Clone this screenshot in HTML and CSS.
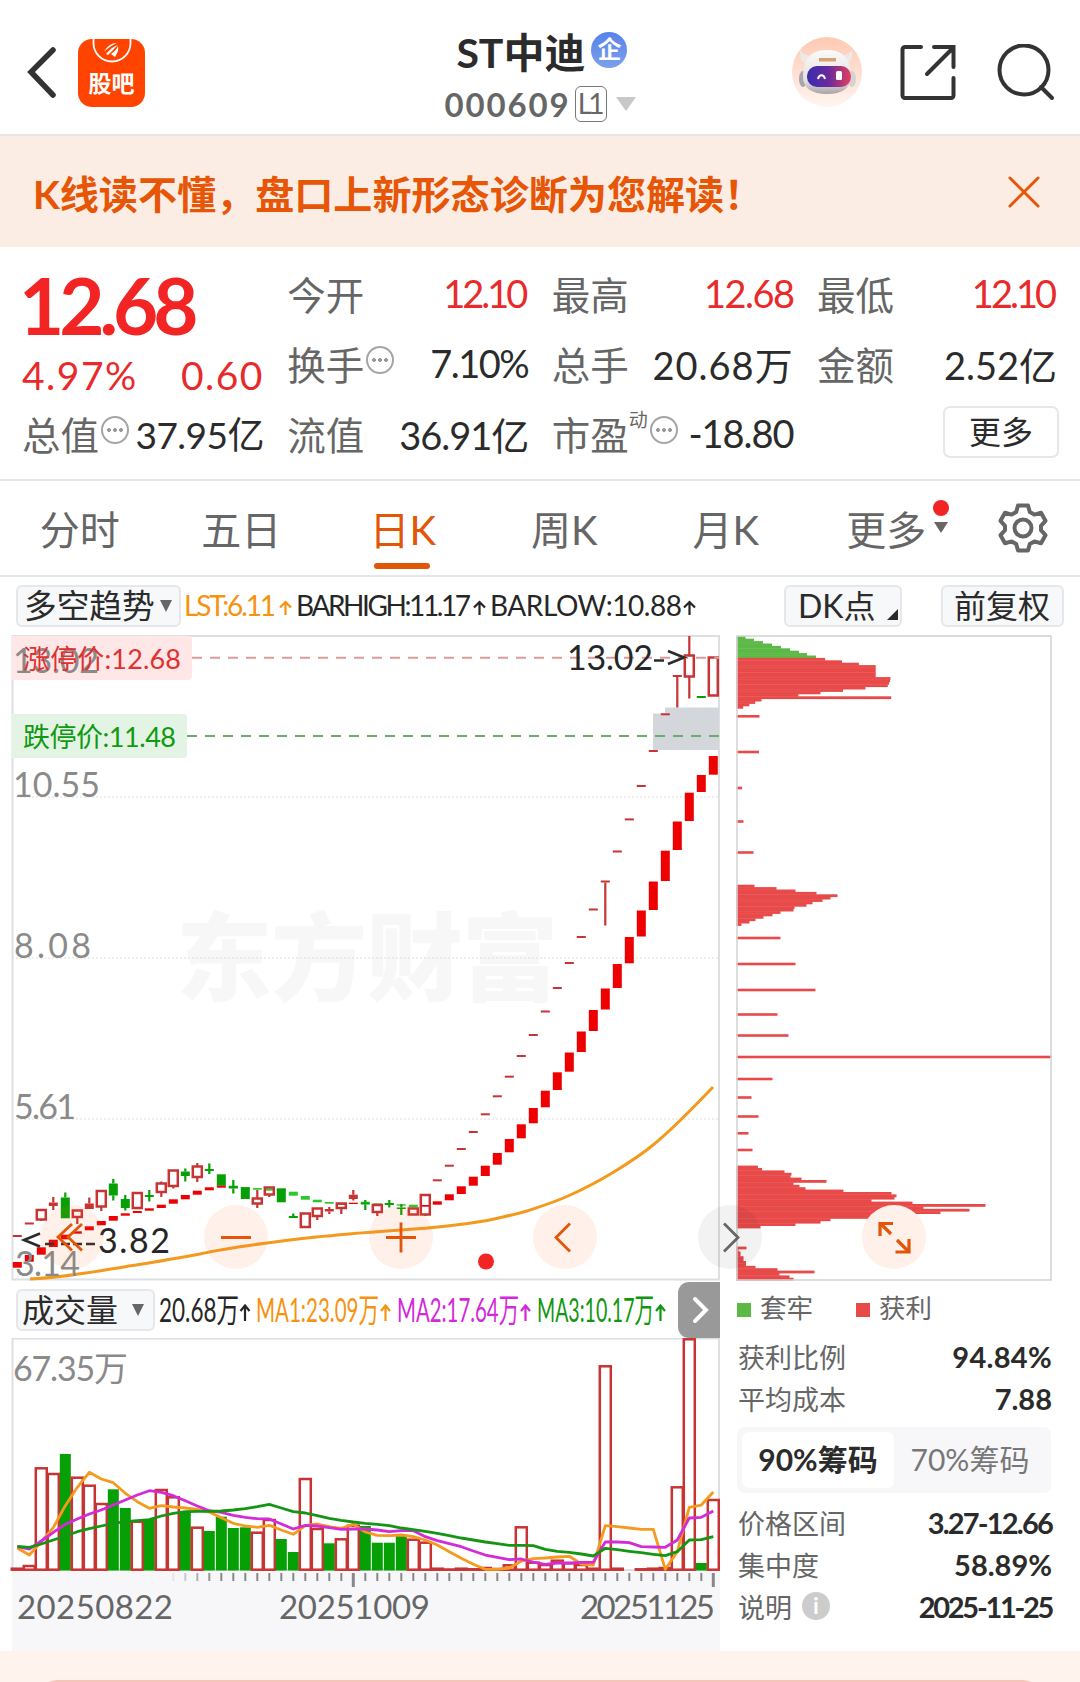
FILE: index.html
```html
<!DOCTYPE html>
<html lang="zh-CN">
<head>
    <meta charset="UTF-8">
    <meta name="viewport" content="width=device-width, initial-scale=1.0">
    <title>ST中迪 000609</title>
    <link rel="stylesheet" href="styles.css">
</head>
<body>
    <header class="header">
        <div class="header-left">
            <svg class="back" width="34" height="56" viewBox="0 0 34 56"><path d="M29 6 7 28l22 23"/></svg>
            <div class="logo">
                <svg width="67" height="68" viewBox="0 0 67 68">
                    <path d="M15.500 0v4a18.500 18.500 0 0 0 37 0V0" fill="none" stroke="#fff" stroke-width="1.800"/>
                    <path d="M26 13c3-6 8-9 13-9-6 3-9 5-13 9zM28 15c4-5 8-8 12-9-4 4-7 7-10 10zM33 15c3-2 6-5 7-8 1 4-1 8-3 11z" fill="#fff"/>
                </svg>
                <span>股吧</span>
            </div>
        </div>
        <div class="title">
            <div class="name">ST中迪<span class="badge">企</span></div>
            <div class="code">000609<span class="level">L1</span><i class="arrow"></i></div>
        </div>
        <div class="header-right">
            <svg width="70" height="70" viewBox="0 0 70 70">
                <defs>
                    <linearGradient id="robotBg" x1="0" y1="0" x2="0" y2="1"><stop offset="0" stop-color="#fdc9b2"/><stop offset="1" stop-color="#fff5f0"/></linearGradient>
                    <linearGradient id="visor"><stop offset="0" stop-color="#3a2cae"/><stop offset=".5" stop-color="#6b2a9c"/><stop offset="1" stop-color="#e5405c"/></linearGradient>
                    <linearGradient id="helmet" x1="0" y1="0" x2="0" y2="1"><stop offset="0" stop-color="#fbfafa"/><stop offset=".7" stop-color="#e4e0e0"/><stop offset="1" stop-color="#a8a3a5"/></linearGradient>
                </defs>
                <circle cx="35" cy="35" r="35" fill="url(#robotBg)"/>
                <path d="M8 13c0 7 1 12 6 14l7-8c-6 0-10-2-13-6zM60 13c1 7-1 12-6 14l-7-8c6 0 10-2 13-6z" fill="#eee8e6"/>
                <ellipse cx="11" cy="42" rx="4" ry="8" fill="#a8a6ab"/>
                <ellipse cx="60" cy="42" rx="4" ry="8" fill="#d5d2d5"/>
                <path d="M35 13c15 0 24 8 24 27 0 11-9 17-24 17s-24-6-24-17c0-19 9-27 24-27z" fill="url(#helmet)"/>
                <rect x="27" y="21" width="17" height="3.500" fill="#dca070"/>
                <rect x="15" y="29" width="44" height="21" rx="10" fill="url(#visor)"/>
                <path d="M26 42c1-5 6-5 7 0" fill="none" stroke="#fff" stroke-width="2"/>
                <rect x="44" y="34" width="6" height="9" rx="1.500" fill="#fff"/>
            </svg>
            <svg class="line" width="56" height="58" viewBox="0 0 56 58"><path d="M21 3H5a2.500 2.500 0 0 0-2.500 2.500v46A2.500 2.500 0 0 0 5 54h46a2.500 2.500 0 0 0 2.500-2.500V34M34 3h19.500v20M53 4 27 30"/></svg>
            <svg class="line" width="58" height="58" viewBox="0 0 58 58"><circle cx="27" cy="26" r="24.500"/><path d="m44 43 11 11"/></svg>
        </div>
    </header>

    <div class="banner">
        <span>K线读不懂，盘口上新形态诊断为您解读！</span>
        <svg width="32" height="32" viewBox="0 0 32 32"><path d="m2 2 28 28M30 2 2 30"/></svg>
    </div>

    <section class="quote">
        <div class="col main">
            <div class="price">12.68</div>
            <div class="item red"><span class="w1">4.97%</span><span class="w1">0.60</span></div>
            <div class="item small"><label>总值</label><i class="tip"></i><b>37.95亿</b></div>
        </div>
        <div class="col">
            <div class="item red"><label>今开</label><b class="t4">12.10</b></div>
            <div class="item"><label>换手</label><i class="tip"></i><b class="t2">7.10%</b></div>
            <div class="item"><label>流值</label><b class="t1">36.91亿</b></div>
        </div>
        <div class="col">
            <div class="item red"><label>最高</label><b class="t2">12.68</b></div>
            <div class="item"><label>总手</label><b class="w2">20.68万</b></div>
            <div class="item"><label>市盈<sup>动</sup></label><i class="tip"></i><b class="t1">-18.80</b></div>
        </div>
        <div class="col">
            <div class="item red"><label>最低</label><b class="t4">12.10</b></div>
            <div class="item"><label>金额</label><b>2.52亿</b></div>
            <div class="item"><button class="more">更多</button></div>
        </div>
    </section>

    <nav class="tabs">
        <div class="tab">分时</div>
        <div class="tab">五日</div>
        <div class="tab active">日K</div>
        <div class="tab">周K</div>
        <div class="tab">月K</div>
        <div class="tab"><span class="tab-more">更多</span></div>
        <div class="gear">
            <svg width="50" height="50" viewBox="0 0 50 50">
                <path d="M20 2.500h10l1.800 6.500 4.500 2.600 6.700-1.800 4.500 8-4.500 5v4.400l4.500 5-4.500 8-6.700-1.800-4.500 2.600L30 47.500H20L18.200 41l-4.500-2.600L7 40.200l-4.500-8 4.500-5v-4.400l-4.500-5 4.500-8 6.700 1.800L18.200 9z"/>
                <circle cx="25" cy="25" r="8.500"/>
            </svg>
        </div>
    </nav>

    <div class="toolbar">
        <div class="chip trend">多空趋势<i class="caret"></i></div>
        <svg class="indicators" width="530" height="40" viewBox="184 587 530 40">
            <g font-size="28">
                <text class="c-orange" x="184" y="617" textLength="92">LST:6.11</text>
                <text class="c-dark" x="296" y="617" textLength="175">BARHIGH:11.17</text>
                <text class="c-dark" x="490" y="617" textLength="192">BARLOW:10.88</text>
            </g>
            <path class="up" stroke="#f59310" d="M285.500 616v-13M280 608.500l5.500-5.500 5.500 5.500"/>
            <path class="up" stroke="#262626" d="M479.500 616v-13M474 608.500l5.500-5.500 5.500 5.500M689.500 616v-13M684 608.500l5.500-5.500 5.500 5.500"/>
        </svg>
        <div class="chip dk">DK点<i class="corner"></i></div>
        <div class="chip adjust">前复权</div>
    </div>

    <div class="charts">
        <div class="left">
            <svg class="kline" width="720" height="646" viewBox="0 635 720 646">
                <text class="watermark" x="176" y="993" textLength="382">东方财富</text>
                <path class="grid" d="M12 797H719M12 958H719M12 1119H719"/>
                <path class="frame" d="M12.500 1279.500V636H719V1279.500z"/>
                <path fill="#d3d7dc" d="M653 750V713.500h12V707.500h54V750z"/>
                <g id="trend"></g>
                <g id="candles"></g>
                <path class="ma" d="M30 1279C48 1278 60 1277 78 1274 97 1272 115 1268 133 1265.500 156 1262 178 1258 200 1254 222 1249 245 1246 267 1243 290 1240 311 1237 333 1235.500 357 1233 379 1231.500 401 1230 416 1229 430 1228 443 1226.500 459 1225 473 1223 487 1220.500 502 1217 514 1215 527 1211 542 1206 555 1202 568 1196 584 1189 598 1181.500 613 1172.500 627 1164 641 1155 653 1145 674 1128 694 1107 713 1087"/>
                <path fill="#fee7e6" d="M12 636h176a4 4 0 0 1 4 4v36a4 4 0 0 1-4 4H12z"/>
                <path fill="#e3f4e5" d="M12 714h171a4 4 0 0 1 4 4v36a4 4 0 0 1-4 4H12z"/>
                <path d="M192 657.700H719" stroke="#dc9b9b" stroke-width="2" stroke-dasharray="10 8"/>
                <path d="M187 736H719" stroke="#6aad6e" stroke-width="2" stroke-dasharray="10 8"/>
                <g class="scale">
                    <text x="13" y="672.500" textLength="86">13.02</text>
                    <text x="13" y="796.500" textLength="87">10.55</text>
                    <text x="14" y="958" textLength="77">8.08</text>
                    <text x="14" y="1118.500" textLength="62">5.61</text>
                    <text x="15" y="1276" textLength="65">3.14</text>
                </g>
                <text x="23" y="669" font-size="27" fill="#e03030" textLength="158">涨停价:12.68</text>
                <text x="23" y="747" font-size="27" fill="#109a10" textLength="153">跌停价:11.48</text>
                <text class="c-dark" x="567" y="670" font-size="34" textLength="86">13.02</text>
                <path class="pointer" d="M654 660.500h10M668 651l16 6.500-16 6.500"/>
                <text class="c-dark" x="98" y="1253" font-size="34" textLength="72">3.82</text>
                <path class="pointer" d="M40 1233.500 24 1240l16 6.500M45 1244h9M61 1244h9M73 1244h9M86 1244h9"/>
                <g class="pads">
                    <circle cx="72" cy="1237" r="32"/>
                    <circle cx="236" cy="1237" r="32"/>
                    <circle cx="401" cy="1237" r="32"/>
                    <circle cx="565" cy="1237" r="32"/>
                    <circle cx="730" cy="1237" r="32" fill="#000" fill-opacity=".05"/>
                </g>
                <path class="pad-icon" d="M72 1224 58 1237l14 13.500M82 1224l-14 13 14 13.500M221 1237.500h30M386 1237.500h30M401 1222.500v30M570 1223.500l-14 14 14 14"/>
                <path class="pad-icon gray" d="M724 1223.500l14 14-14 14"/>
                <circle cx="486" cy="1261.500" r="8" fill="#f22424"/>
            </svg>
            <div class="vol-head">
                <div class="chip vol">成交量<i class="caret"></i></div>
                <svg width="514" height="44" viewBox="158 1288 514 44">
                    <g font-size="33">
                        <text class="c-dark" x="159" y="1322" textLength="80" lengthAdjust="spacingAndGlyphs">20.68万</text>
                        <text class="c-orange" x="256" y="1322" textLength="123" lengthAdjust="spacingAndGlyphs">MA1:23.09万</text>
                        <text class="c-purple" x="397" y="1322" textLength="122" lengthAdjust="spacingAndGlyphs">MA2:17.64万</text>
                        <text class="c-green" x="537" y="1322" textLength="117" lengthAdjust="spacingAndGlyphs">MA3:10.17万</text>
                    </g>
                    <path class="up" stroke="#262626" d="M245 1321v-15M240.500 1311l4.500-5.500 4.500 5.500"/>
                    <path class="up" stroke="#f59310" d="M385.500 1321v-15M381 1311l4.500-5.500 4.500 5.500"/>
                    <path class="up" stroke="#d22ad8" d="M525.500 1321v-15M521 1311l4.500-5.500 4.500 5.500"/>
                    <path class="up" stroke="#119611" d="M660.500 1321v-15M656 1311l4.500-5.500 4.500 5.500"/>
                </svg>
                <div class="next"><svg width="20" height="30" viewBox="0 0 20 30"><path d="m4 4 11 11L4 26"/></svg></div>
            </div>
            <svg class="volume" width="720" height="313" viewBox="0 1338 720 313">
                <rect x="12" y="1571" width="708" height="80" fill="#f7f7fa"/>
                <path class="frame" d="M12.500 1570V1338.500H719V1570z"/>
                <text class="scale" x="13" y="1381" textLength="115">67.35万</text>
                <g id="volumes"></g>
                <g id="lines"></g>
                <g id="ticks"></g>
                <g class="dates">
                    <text x="17" y="1619" textLength="156">20250822</text>
                    <text x="279" y="1619" textLength="151">20251009</text>
                    <text x="580" y="1619" textLength="135">20251125</text>
                </g>
            </svg>
        </div>

        <div class="right">
            <svg width="316" height="646" viewBox="736 635 316 646">
                <g id="chips"></g>
                <path d="M737 636H1051V1280H737z" fill="none" stroke="#d2d2d4" stroke-width="1.500"/>
                <circle cx="894" cy="1237" r="32" fill="#fff0e9"/>
                <path class="expand" d="M891 1234 881 1224M880 1236v-12.500h13M897 1240l11 11M909 1239v13h-13.500"/>
            </svg>
            <div class="legend">
                <span><i class="green"></i>套牢</span>
                <span><i></i>获利</span>
            </div>
            <div class="row"><span>获利比例</span><b class="wide">94.84%</b></div>
            <div class="row"><span>平均成本</span><b>7.88</b></div>
            <div class="segment">
                <div class="on">90%筹码</div>
                <div>70%筹码</div>
            </div>
            <div class="row"><span>价格区间</span><b class="tight">3.27-12.66</b></div>
            <div class="row"><span>集中度</span><b>58.89%</b></div>
            <div class="row"><span>说明<i class="info">i</i></span><b class="tight date">2025-11-25</b></div>
        </div>
    </div>

    <footer class="footer"><div class="sheet"></div></footer>

    <script src="chart.js"></script>
</body>
</html>
```
FILE: styles.css
```css
* {
    box-sizing: border-box;
}

body {
    margin: 0;
    width: 1080px;
    height: 1682px;
    overflow: hidden;
    background: #fff;
    color: #2b2b2b;
    font-family: Lato, "Noto Sans CJK SC", sans-serif;
}

svg {
    display: block;
    flex: none;
}

i, b, label {
    font-style: normal;
    font-weight: 400;
}

svg text {
    font-family: Lato, "Noto Sans CJK SC", sans-serif;
}

.header {
    display: grid;
    grid-template-columns: 1fr auto 1fr;
    height: 136px;
    border-bottom: 2px solid #e6e6e6;
}

.header-left {
    display: flex;
    align-items: flex-start;
    gap: 20px;
    padding: 39px 0 0 24px;
}

.back {
    margin-top: 5px;
    fill: none;
    stroke: #333;
    stroke-width: 5.5;
    stroke-linecap: round;
}

.logo {
    display: grid;
    width: 67px;
    height: 68px;
    border-radius: 14px;
    background: #ff4400;
    overflow: hidden;
}

.logo > * {
    grid-area: 1 / 1;
}

.logo span {
    padding-top: 30px;
    color: #fff;
    font-size: 23px;
    font-weight: 700;
    line-height: 28px;
    text-align: center;
}

.title {
    padding-top: 27px;
}

.name {
    display: flex;
    align-items: center;
    height: 46px;
    padding-left: 12px;
    font-size: 41px;
    font-weight: 700;
}

.badge {
    width: 36px;
    height: 36px;
    margin-left: 6px;
    border-radius: 50%;
    background: linear-gradient(#5882ea, #7ba0ea);
    color: #fff;
    font-size: 24px;
    line-height: 34px;
    text-align: center;
}

.code {
    display: flex;
    align-items: center;
    height: 62px;
    color: #666;
    font-size: 33px;
    font-weight: 700;
    letter-spacing: 1.9px;
}

.level {
    width: 32px;
    height: 36px;
    margin-left: 4px;
    padding-right: 3px;
    border: 1.5px solid #777;
    border-radius: 6px;
    font-size: 28px;
    font-weight: 400;
    line-height: 33px;
    letter-spacing: -4px;
    text-align: center;
}

.arrow {
    margin-left: 9px;
    border: 10px solid transparent;
    border-top: 14px solid #c8c8c8;
    border-bottom: 0;
}

.header-right {
    display: flex;
    justify-content: flex-end;
    align-items: flex-start;
    padding: 37px 25px 0 0;
    gap: 38px;
}

.line {
    margin-top: 7px;
    fill: none;
    stroke: #333;
    stroke-width: 4;
    stroke-linecap: round;
}

.line + .line {
    margin-left: 3px;
}

.banner {
    display: flex;
    justify-content: space-between;
    align-items: center;
    height: 111px;
    padding: 0 40px 0 33px;
    background: #fcede4;
    color: #e65606;
    font-size: 39.1px;
    font-weight: 700;
}

.banner svg {
    fill: none;
    stroke: #e65606;
    stroke-width: 3;
    stroke-linecap: round;
}

.quote {
    display: grid;
    grid-template-columns: 242px 241px 242px 240px;
    justify-content: space-between;
    height: 234px;
    padding: 11px 23px 0 22px;
    border-bottom: 2px solid #e6e7e8;
}

.item {
    display: flex;
    align-items: center;
    height: 70px;
    font-size: 39px;
    white-space: nowrap;
}

.item label {
    color: #666;
    font-size: 38.5px;
}

.item b, .item .w1:last-child {
    margin-left: auto;
}

.item b {
    font-size: 38px;
}

.item.small b {
    font-size: 37px;
    letter-spacing: -.5px;
}

.item sup {
    font-size: 19px;
    line-height: 0;
    vertical-align: 23px;
    letter-spacing: 0;
}

.w1 {
    letter-spacing: 1.5px;
}

.w2 {
    letter-spacing: 1px;
}

.t1 {
    letter-spacing: -1px;
}

.t2 {
    letter-spacing: -1.5px;
}

.t4 {
    padding-right: 3px;
    letter-spacing: -3px;
}

.red {
    color: #e92a2a;
}

.price {
    height: 82px;
    margin-left: -3px;
    color: #f22424;
    font-size: 78px;
    font-weight: 700;
    line-height: 94px;
    letter-spacing: -5px;
}

.main .item {
    height: 69px;
}

.main .small {
    height: 48px;
}

.tip {
    width: 28px;
    height: 28px;
    margin: -6px 0 0 2px;
    border: 2px solid #a5a5a5;
    border-radius: 50%;
    background:
        radial-gradient(circle at 6px 12px, #999 1.7px, transparent 2.2px),
        radial-gradient(circle at 12px 12px, #999 1.7px, transparent 2.2px),
        radial-gradient(circle at 18px 12px, #999 1.7px, transparent 2.2px);
}

.more {
    width: 116px;
    height: 52px;
    margin: -2px 0 0 auto;
    border: 2px solid #e7e7e7;
    border-radius: 7px;
    background: #fff;
    color: #2b2b2b;
    font-family: inherit;
    font-size: 32px;
    line-height: 44px;
    position: relative;
    left: 2px;
}

.tabs {
    display: grid;
    grid-template-columns: repeat(6, 161.5px) 1fr;
    height: 96px;
    padding-left: 0;
    border-bottom: 2px solid #e6e7e8;
    color: #666;
    font-size: 40px;
}

.tab {
    display: flex;
    flex-direction: column;
    align-items: center;
    height: 95px;
    padding-right: 2px;
    line-height: 98px;
}

.active {
    color: #e25609;
}

.active::after {
    content: "";
    width: 56px;
    height: 6px;
    margin: -16px 2px 0 0;
    border-radius: 3px;
    background: #e25609;
}

.tab-more {
    position: relative;
    left: -1px;
}

.tab-more::before {
    content: "";
    position: absolute;
    top: 19px;
    right: -23px;
    width: 16px;
    height: 16px;
    border-radius: 50%;
    background: #f22424;
}

.tab-more::after {
    content: "";
    position: absolute;
    top: 41px;
    right: -22px;
    border: 7px solid transparent;
    border-top: 11px solid #666;
    border-bottom: 0;
}

.gear svg {
    margin: 22px 0 0 29px;
    fill: none;
    stroke: #666;
    stroke-width: 4;
    stroke-linejoin: round;
}

.toolbar {
    display: flex;
    align-items: center;
    height: 58px;
    padding: 0 16px;
}

.chip {
    display: flex;
    align-items: center;
    height: 42px;
    padding: 0 12px;
    border: 2px solid #e5e7ea;
    border-radius: 6px;
    background: #f7f8fa;
    font-size: 32px;
    line-height: 38px;
    white-space: nowrap;
}

.trend {
    width: 165px;
    padding: 0 0 0 6px;
    font-size: 32.7px;
}

.vol {
    width: 139px;
    padding: 0 0 0 4px;
}

.caret {
    margin-left: 5px;
    border: 6.5px solid transparent;
    border-top: 12px solid #666;
    border-bottom: 0;
}

.vol .caret {
    margin-left: 14px;
}

.indicators {
    margin-left: 3px;
}

.dk {
    width: 118px;
    margin: 0 39px 0 auto;
}

.adjust {
    width: 123px;
    padding: 0 0 0 11px;
}

.corner {
    margin: 17px 0 0 11px;
    border-left: 11px solid transparent;
    border-bottom: 11px solid #2b2b2b;
}

.up {
    fill: none;
    stroke-width: 2.2;
}

.c-dark { fill: #262626; }
.c-orange { fill: #f59310; }
.c-purple { fill: #d22ad8; }
.c-green { fill: #119611; }

.charts {
    display: flex;
    gap: 16px;
    height: 1016px;
}

.left {
    width: 720px;
    position: relative;
    z-index: 1;
}

.kline {
    overflow: visible;
}

.frame {
    fill: none;
    stroke: #dedfe1;
    stroke-width: 2;
}

.grid {
    fill: none;
    stroke: #dcdcdc;
    stroke-dasharray: 2 2;
}

.watermark {
    fill: #f7f7f8;
    font-size: 96px;
    font-weight: 900;
}

.scale {
    fill: #8a8a8a;
    font-size: 34px;
}

.ma {
    fill: none;
    stroke: #f39a1c;
    stroke-width: 3;
}

.pointer {
    fill: none;
    stroke: #2b2b2b;
    stroke-width: 2.6;
}

.pads {
    fill: #ff6a28;
    fill-opacity: .1;
}

.pad-icon, .expand {
    fill: none;
    stroke: #e25609;
    stroke-width: 2.8;
}

.expand {
    stroke-width: 3.2;
}

.gray {
    stroke: #666;
}

.vol-head {
    display: flex;
    align-items: center;
    height: 57px;
    padding-left: 16px;
}

.vol-head > svg {
    margin-left: 3px;
}

.next {
    display: flex;
    align-items: center;
    width: 42px;
    height: 56px;
    margin-left: auto;
    padding-left: 13px;
    border-radius: 11px 0 0 11px;
    background: #999;
    fill: none;
    stroke: #fff;
    stroke-width: 4;
    stroke-linecap: round;
}

.dates {
    fill: #666;
    font-size: 33px;
}

.right {
    width: 316px;
}

.legend {
    display: flex;
    gap: 43px;
    height: 54px;
    padding: 0 0 0 1px;
    color: #666;
    font-size: 26.5px;
    line-height: 58px;
}

.legend span {
    display: flex;
    align-items: center;
}

.legend i {
    width: 14px;
    height: 14px;
    margin: 3px 9px 0 0;
    background: #e84a4a;
}

.legend .green {
    background: #5cb946;
}

.row {
    display: flex;
    justify-content: space-between;
    align-items: center;
    height: 42px;
    padding-left: 2px;
    color: #666;
    font-size: 27px;
}

.row span {
    display: flex;
    align-items: center;
}

.row b {
    color: #2b2b2b;
    font-size: 29px;
    font-weight: 700;
}

.row .wide {
    letter-spacing: .3px;
}

.row .tight {
    letter-spacing: -1.8px;
}

.row .date {
    letter-spacing: -2.3px;
}

.segment {
    display: grid;
    grid-template-columns: 152px 1fr;
    height: 66px;
    margin: 8px 1px;
    padding: 5px;
    border-radius: 7px;
    background: #f7f7fa;
    color: #777;
    font-size: 30px;
    line-height: 54px;
    text-align: center;
}

.on {
    border-radius: 7px;
    background: #fff;
    color: #2b2b2b;
    font-weight: 700;
}

.info {
    width: 28px;
    height: 28px;
    margin-left: 10px;
    border-radius: 50%;
    background: #ccc;
    color: #fff;
    font-size: 23px;
    font-weight: 700;
    line-height: 27px;
    text-align: center;
}

.footer {
    height: 31px;
    padding: 29px 34px 0;
    overflow: hidden;
    background: #fff3ee;
}

.sheet {
    height: 60px;
    border: 2px solid #f8c4b8;
    border-radius: 24px;
    background: #fff0ea;
}
```
FILE: chart.js
```javascript
const STEP = 12;
const FIRST = 17.3;
const RED = '#c83434';
const GREEN = '#06a006';

function rect(x, y, w, h, fill, stroke) {
    return `<rect x="${x}" y="${y}" width="${w}" height="${h}" fill="${fill}"` +
        (stroke ? ` stroke="${stroke}" stroke-width="2.5"` : '') + '/>';
}

function cx(i) {
    return +(FIRST + i * STEP).toFixed(1);
}

// [type, high, body top, body bottom, low], h = hollow, r = red, g = green
const candles = [
    ['r', 1235, 1235, 1237, 1237], ['r', 1222.5, 1222.5, 1224.5, 1224.5], ['h', 1210, 1210, 1219.5, 1221],
    ['r', 1197, 1202.5, 1206, 1210], ['g', 1192.5, 1197.5, 1218.3, 1218.3], ['h', 1210.5, 1210.5, 1217, 1224],
    ['r', 1197.5, 1203.5, 1209, 1209], ['h', 1191, 1191, 1206.5, 1211], ['g', 1179, 1183.5, 1195.5, 1200.5],
    ['g', 1195, 1199, 1208, 1210.5], ['h', 1193, 1193, 1208, 1208], ['g', 1190, 1195, 1197, 1201.5],
    ['h', 1181.5, 1183.5, 1192, 1197], ['h', 1170.5, 1170.5, 1186, 1188.5], ['g', 1168.5, 1171.5, 1176, 1181.5],
    ['h', 1163, 1166.5, 1177, 1182], ['g', 1163.5, 1169, 1171, 1174], ['g', 1174.3, 1174.3, 1185.5, 1185.5],
    ['g', 1180, 1186, 1188.5, 1193.5], ['g', 1187.3, 1187.3, 1199, 1199], ['h', 1190, 1198.5, 1203.5, 1208],
    ['h', 1187.5, 1187.5, 1194.5, 1197], ['g', 1188.3, 1188.3, 1202.3, 1202.3], ['g', 1213.5, 1216, 1218, 1218],
    ['h', 1213.5, 1213.5, 1227, 1227], ['h', 1208.5, 1208.5, 1216, 1220], ['r', 1207, 1209, 1211.5, 1214],
    ['h', 1203.5, 1203.5, 1208, 1214], ['r', 1190, 1194.7, 1199, 1200.5], ['g', 1200, 1202.5, 1204.5, 1210],
    ['h', 1205, 1205, 1212, 1216], ['g', 1200, 1203, 1205, 1207.5], ['g', 1204, 1207.5, 1209, 1215],
    ['h', 1208.5, 1208.5, 1214.5, 1214.5], ['h', 1195, 1195, 1214.5, 1216]
];
[1180.3, 1165.7, 1149, 1132, 1114.3, 1096.3, 1076.7, 1056, 1035, 1011.5, 988, 963, 937, 909.5].forEach(y => {
    candles.push(['r', y - 1, y - 1, y + 1, y + 1]);
});
candles.push(['r', 880.5, 880.5, 882.5, 925.5]);
[851.5, 819.4, 786, 751, 714.3].forEach(y => {
    candles.push(['r', y - 1, y - 1, y + 1, y + 1]);
});
candles.push(['r', 675, 675, 677, 707.5]);
candles.push(['h', 636, 655.5, 676.5, 698.5]);
candles.push(['g', 696, 696, 698, 698]);
candles.push(['h', 657.5, 657.5, 695.5, 695.5]);

document.getElementById('candles').innerHTML = candles.map(([type, high, top, bottom, low], i) => {
    const x = cx(i);
    const color = type === 'g' ? GREEN : RED;
    let out = '';
    if (high < top) out += rect(x - 1.1, high, 2.2, top - high, color);
    if (low > bottom) out += rect(x - 1.1, bottom, 2.2, low - bottom, color);
    out += type === 'h'
        ? rect(x - 4.5, top, 9, bottom - top, 'none', color)
        : rect(x - 4.5, top, 9, bottom - top, color);
    return out;
}).join('');

// trend blocks: [top, bottom]
const trend = [
    [1262, 1267.7], [1255, 1261.7], [1247.3, 1254.7], [1239.7, 1247], [1234.7, 1239.3], [1231.3, 1233.7], [1226.3, 1230.3],
    [1221, 1225.3], [1216, 1220.7], [1213.3, 1215.7], [1211, 1213], [1208.3, 1210.7], [1204.7, 1208], [1199.3, 1203.7],
    [1195, 1199.3], [1190.7, 1194.7], [1187.3, 1190.3], [1185.3, 1187.7], [1185.7, 1187.7], [1187, 1188.7], [1188, 1189.7],
    [1188.7, 1190.7], [1189, 1191], [1191.7, 1195.7], [1196, 1199.7], [1199.7, 1202.3], [1202, 1203.7], [1203.3, 1205],
    [1202.7, 1204], [1201.7, 1203], [1203.3, 1205], [1203, 1204.7], [1204.3, 1205.7], [1204.7, 1207.3], [1205, 1206.7],
    [1201.3, 1204.7], [1194.3, 1200.3], [1186.3, 1194], [1176.7, 1185.7], [1165.7, 1176], [1153, 1164.7], [1139, 1152.3],
    [1124.3, 1138.3], [1108, 1123.3], [1090.7, 1107.3], [1072.3, 1090], [1052.5, 1071.7], [1031.5, 1052], [1010, 1031],
    [988.5, 1009.5], [964, 988], [937, 963.3], [910.5, 936.5], [881.5, 910], [850.7, 881], [821.5, 850], [792.7, 821],
    [775, 792], [756, 774.7]
];
document.getElementById('trend').innerHTML = trend.map(([top, bottom], i) => {
    const down = i > 17 && i < 34 && i !== 28;
    return rect(cx(i) - 4.5, top, 9, (bottom - top).toFixed(1), down ? '#2fc72f' : '#ee0000');
}).join('');

// volume bar tops, measured on the panel that starts at 1338 and ends at 1570
const tops = [
    1568.7, 1566, 1468.3, 1474, 1454, 1477.7, 1485.7, 1504, 1489.3, 1508, 1521.7, 1519, 1490, 1497.3, 1511.7, 1527.7, 1531,
    1516.7, 1528, 1527.3, 1532.7, 1520, 1539, 1552, 1479, 1529, 1543.3, 1539.3, 1525.7, 1526, 1542.7, 1542.7, 1536, 1539.7,
    1542.7, 1568.7, 1569.5, 1568.7, 1569.3, 1568, 1569, 1565.3, 1527.3, 1562.7, 1565, 1560.7, 1563.3, 1565, 1568.7, 1366.3,
    1568.7, 1569.7, 1569.3, 1568.7, 1568, 1487.3, 1339.3, 1563, 1500
];
const falling = [4, 8, 9, 11, 14, 16, 17, 18, 19, 22, 23, 26, 29, 30, 31, 32, 57];
document.getElementById('volumes').innerHTML = tops.map((top, i) => {
    const x = cx(i);
    if (falling.includes(i)) return rect(x - 5.5, top, 11, 1570.5 - top, GREEN);
    return rect(x - 5.5, top, 11, (1569.7 - top).toFixed(1), 'none', RED);
}).join('');

const averages = {
    '#f59a1c': [
        1548, 1555, 1541.7, 1527.7, 1505.7, 1487.3, 1472.3, 1479, 1482.7, 1493.3, 1501.7, 1508.3, 1505.7, 1507, 1508,
        1509.3, 1512, 1517.7, 1523.3, 1526, 1527.3, 1525.3, 1530, 1534.3, 1525.7, 1524, 1526.7, 1528.3, 1524.3, 1532,
        1535.3, 1535.7, 1535, 1536.7, 1540, 1545, 1551.7, 1558.3, 1564.3, 1569.3, 1569.3, 1568, 1561, 1558.7, 1558, 1557,
        1556.3, 1564, 1565, 1525.7, 1526.7, 1528, 1529.3, 1529.3, 1569.3, 1551.7, 1507.3, 1505, 1492
    ],
    '#d42bd8': [
        1546.7, 1549, 1541, 1532.3, 1524.3, 1519, 1514, 1510, 1505, 1500, 1495, 1490.7, 1492.3, 1495.7, 1500.7, 1506,
        1510.7, 1512.3, 1515.3, 1517.3, 1518.7, 1519, 1524, 1529, 1525.3, 1526, 1527.7, 1529.3, 1529, 1529, 1530, 1531.7,
        1530.7, 1530.7, 1536.7, 1540.7, 1543.7, 1546.7, 1551, 1555, 1557.3, 1559.7, 1559, 1562, 1564.3, 1563, 1563,
        1562.3, 1562.3, 1542, 1542, 1542.7, 1546.7, 1547, 1547.3, 1540, 1518, 1517.3, 1511
    ],
    '#149614': [
        1546.3, 1547.3, 1544, 1540, 1536, 1531.7, 1528.7, 1526, 1523.3, 1521.7, 1520.7, 1519.7, 1516, 1513.3, 1511.7,
        1511.3, 1511.3, 1511, 1510, 1508.7, 1506.7, 1504.3, 1508, 1511.7, 1513, 1515.7, 1518.3, 1520.3, 1522, 1523.3,
        1524.3, 1525.7, 1528, 1529.7, 1531.3, 1533.3, 1535.7, 1538, 1540, 1542, 1543.7, 1545.3, 1545.3, 1545.7, 1549.3,
        1551.3, 1552.3, 1554, 1556, 1548.3, 1549.7, 1551.3, 1552.7, 1554.3, 1555.7, 1551.7, 1540, 1539.7, 1536.7
    ]
};
document.getElementById('lines').innerHTML = Object.entries(averages).map(([color, ys]) => {
    const points = ys.map((y, i) => `${cx(i)},${y}`).join(' ');
    return `<polyline points="${points}" fill="none" stroke="${color}" stroke-width="2.8" stroke-linejoin="round"/>`;
}).join('');

let ticks = '';
for (let i = 13; i < candles.length; i++) {
    const major = i === 28 || i === 58;
    const opacity = Math.min(1, 0.15 + (i - 13) * 0.25);
    ticks += `<rect x="${cx(i) - (major ? 1.5 : 1)}" y="1573" width="${major ? 3 : 2}" height="${major ? 14 : 8}" fill="#888" opacity="${opacity}"/>`;
}
document.getElementById('ticks').innerHTML = ticks;

// chip distribution
const BAR = 2.4;
function stack(start, widths, color) {
    return widths.map((w, i) => rect(736.5, (start + i * BAR).toFixed(1), w, BAR + 0.4, color)).join('');
}
const PROFIT = '#e84a4a';
let chips = stack(636.3, [9, 17.5, 26.5, 35.5, 44.5, 53.5, 62.5, 70.5, 79.5], '#5cb946');
chips += stack(657.9, [88.6, 105.5, 122.4, 139.2, 139.2, 139.2, 139.2, 139.2, 154, 153.5, 152.5, 151.3, 129, 106.5, 84, 61.8, 154.7, 25, 18.7, 12.9, 6.7], PROFIT);
chips += stack(884.7, [18, 40, 59, 80, 101, 94, 86, 76, 70, 58, 57, 44, 36, 27, 19, 13, 5], PROFIT);
chips += stack(1165.6, [21.5, 25.5, 48, 55, 54, 65, 90, 57, 63, 69, 107, 155, 160, 158, 135, 176, 249, 187, 233, 204, 162, 150, 94, 84, 59, 24], PROFIT);
chips += stack(1246.6, [10, 2, 4, 4, 7, 7, 9.5, 9.5, 19, 41, 78, 43, 53, 57], PROFIT);
[
    [716.3, 23], [752, 22.5], [788, 5.6], [821.5, 7], [852.5, 17], [938, 44], [964, 59], [990, 79], [1014.5, 41],
    [1035.5, 52], [1057, 315], [1079, 36], [1097.5, 15], [1116.5, 22], [1133.3, 12], [1150, 16]
].forEach(([y, w]) => {
    chips += rect(736.5, y - 1.3, w, 2.6, PROFIT);
});
document.getElementById('chips').innerHTML = chips;
```
